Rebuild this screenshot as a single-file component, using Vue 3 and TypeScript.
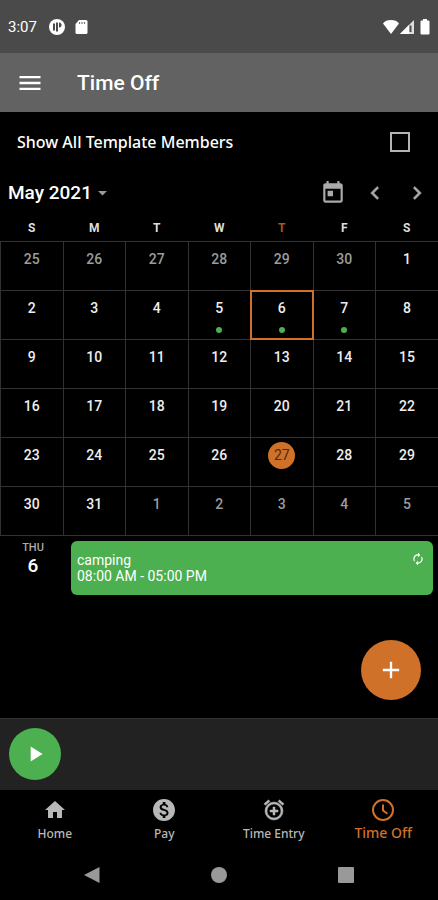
<script setup lang="ts">
import { computed, ref } from 'vue'

interface Day {
  key: number
  date: number
  current: boolean
  today: boolean
  marked: boolean
}

const weekdays = ['S', 'M', 'T', 'W', 'T', 'F', 'S']
const activeWeekday = 4
const showAll = ref(false)
const selected = ref(11)

const weeks = computed<Day[][]>(() =>
  Array.from({ length: 6 }, (_, w) =>
    Array.from({ length: 7 }, (_, d) => {
      const key = w * 7 + d
      const offset = key - 5
      const current = offset >= 1 && offset <= 31
      const date = offset < 1 ? offset + 30 : offset > 31 ? offset - 31 : offset
      return {
        key,
        date,
        current,
        today: current && date === 27,
        marked: current && date >= 5 && date <= 7,
      }
    }),
  ),
)
</script>

<template>
  <div class="app">
    <div class="status">
      <span class="clock">3:07</span>
      <svg class="status-icon" viewBox="0 0 16 16" aria-hidden="true">
        <circle cx="8" cy="8" r="8" fill="#fff" />
        <path d="M4 4.500h2v7H4z" fill="#4a4a4a" />
        <path d="M7 3.500h2v9H7z" fill="#4a4a4a" />
        <path d="M10 3.500a2.500 2.500 0 0 1 0 5z" fill="#4a4a4a" />
      </svg>
      <svg class="status-icon" viewBox="0 0 16 16" aria-hidden="true">
        <path d="M6 1h7a1.500 1.500 0 0 1 1.500 1.500v11A1.500 1.500 0 0 1 13 15H4a1.500 1.500 0 0 1-1.500-1.500V5z" fill="#fff" />
        <path d="M6.500 3v2M9 3v2M11.500 3v2" stroke="#777" stroke-width="1.200" />
      </svg>
      <div class="status-right">
        <svg class="status-icon" viewBox="0 0 16 16" aria-hidden="true">
          <path d="M0 4.500C1.500 2 4.500 1 8 1s6.500 1 8 3.500L8 15z" fill="#fff" />
        </svg>
        <svg class="status-icon" viewBox="0 0 16 16" aria-hidden="true">
          <path d="M1 15 15 1v14z" fill="#ddd" />
          <path d="M1 15 10 6v9z" fill="#fff" />
          <path d="M10.500 6.500h2V13h-2z" fill="#4a4a4a" />
        </svg>
        <svg class="battery" viewBox="0 0 10 16" aria-hidden="true">
          <path d="M3 0h4v1.500h1.500A1 1 0 0 1 9.500 2.500v12a1 1 0 0 1-1 1h-7a1 1 0 0 1-1-1v-12a1 1 0 0 1 1-1H3z" fill="#fff" />
        </svg>
      </div>
    </div>

    <header class="appbar">
      <button class="icon-btn" type="button" aria-label="Menu">
        <svg width="28" height="28" viewBox="0 0 24 24"><path d="M3 18h18v-2H3v2zm0-5h18v-2H3v2zm0-7v2h18V6H3z" fill="#fff" /></svg>
      </button>
      <h1>Time Off</h1>
    </header>

    <label class="show-all">
      <span>Show All Template Members</span>
      <input v-model="showAll" type="checkbox" />
    </label>

    <div class="month-row">
      <button class="month" type="button">
        May 2021
        <svg width="9" height="5" viewBox="0 0 9 5" aria-hidden="true"><path d="M0 0h9L4.500 4.500z" fill="#9a9a9a" /></svg>
      </button>
      <button class="icon-btn" type="button" aria-label="Today">
        <svg width="26" height="26" viewBox="0 0 24 24">
          <path d="M19 3h-1V1h-2v2H8V1H6v2H5c-1.110 0-1.990.9-1.990 2L3 19c0 1.100.89 2 2 2h14c1.100 0 2-.9 2-2V5c0-1.100-.9-2-2-2zm0 16H5V8h14v11zM7 10h5v5H7z" fill="#aaa" />
        </svg>
      </button>
      <button class="icon-btn arrow" type="button" aria-label="Previous month">
        <svg width="26" height="26" viewBox="0 0 24 24"><path d="M15.410 7.410 14 6l-6 6 6 6 1.410-1.410L10.830 12z" fill="#aaa" stroke="#aaa" stroke-width=".5" /></svg>
      </button>
      <button class="icon-btn arrow" type="button" aria-label="Next month">
        <svg width="26" height="26" viewBox="0 0 24 24"><path d="M10 6 8.590 7.410 13.170 12l-4.580 4.590L10 18l6-6z" fill="#aaa" stroke="#aaa" stroke-width=".5" /></svg>
      </button>
    </div>

    <table class="calendar">
      <thead>
        <tr>
          <th v-for="(name, i) in weekdays" :key="i" :class="{ active: i === activeWeekday }" scope="col">{{ name }}</th>
        </tr>
      </thead>
      <tbody>
        <tr v-for="(week, w) in weeks" :key="w">
          <td v-for="day in week" :key="day.key">
            <button
              class="day"
              type="button"
              :class="{ other: !day.current, today: day.today, selected: day.key === selected, marked: day.marked }"
              @click="selected = day.key"
            >
              <span>{{ day.date }}</span>
            </button>
          </td>
        </tr>
      </tbody>
    </table>

    <main class="agenda">
      <section class="agenda-day">
        <div class="agenda-date">
          <span class="agenda-name">THU</span>
          <span class="agenda-number">6</span>
        </div>
        <article class="event">
          <div class="event-text">
            <span>camping</span>
            <span>08:00 AM - 05:00 PM</span>
          </div>
          <svg width="14" height="14" viewBox="0 0 24 24" aria-hidden="true">
            <path d="M12 6v3l4-4-4-4v3c-4.420 0-8 3.580-8 8 0 1.570.46 3.030 1.240 4.260L6.700 14.800A5.870 5.870 0 0 1 6 12c0-3.310 2.690-6 6-6zm6.760 1.740L17.300 9.200c.44.84.7 1.790.7 2.800 0 3.310-2.690 6-6 6v-3l-4 4 4 4v-3c4.420 0 8-3.580 8-8 0-1.570-.46-3.030-1.240-4.260z" fill="#fff" />
          </svg>
        </article>
      </section>
      <button class="fab" type="button" aria-label="Add time off">
        <svg width="28" height="28" viewBox="0 0 24 24"><path d="M19 13h-6v6h-2v-6H5v-2h6V5h2v6h6z" fill="#fff" /></svg>
      </button>
    </main>

    <div class="timer">
      <button class="play" type="button" aria-label="Start timer">
        <svg width="26" height="26" viewBox="0 0 24 24"><path d="M8 5v14l11-7z" fill="#fff" /></svg>
      </button>
    </div>

    <nav class="tabs">
      <a href="#home">
        <svg viewBox="0 0 24 24"><path d="M10 20v-6h4v6h5v-8h3L12 3 2 12h3v8z" /></svg>
        Home
      </a>
      <a href="#pay">
        <svg viewBox="0 0 24 24">
          <path d="M12 1C5.900 1 1 5.900 1 12s4.900 11 11 11 11-4.900 11-11S18.100 1 12 1zm1.410 17.090V20h-2.670v-1.930c-1.710-.36-3.160-1.460-3.270-3.400h1.960c.1 1.050.82 1.870 2.650 1.870 1.960 0 2.400-.98 2.400-1.590 0-.83-.44-1.610-2.670-2.140-2.480-.6-4.180-1.620-4.180-3.670 0-1.720 1.390-2.840 3.110-3.210V4h2.670v1.950c1.860.45 2.790 1.860 2.850 3.390H14.300c-.05-1.110-.64-1.870-2.220-1.870-1.500 0-2.400.68-2.400 1.640 0 .84.65 1.390 2.670 1.910s4.180 1.390 4.180 3.910c-.01 1.830-1.380 2.830-3.120 3.160z" />
        </svg>
        Pay
      </a>
      <a href="#time-entry">
        <svg viewBox="0 0 24 24">
          <path d="M7.880 3.390 6.600 1.860 2 5.710l1.290 1.530 4.590-3.850zM22 5.720l-4.600-3.860-1.290 1.530 4.600 3.860L22 5.720zM12 4a9 9 0 1 0 0 18 9 9 0 0 0 0-18zm0 16a7 7 0 1 1 0-14 7 7 0 0 1 0 14zm1-11h-2v3H8v2h3v3h2v-3h3v-2h-3V9z" stroke="currentColor" stroke-width=".5" />
        </svg>
        Time Entry
      </a>
      <a href="#time-off" class="current" aria-current="page">
        <svg viewBox="0 0 24 24">
          <path d="M12 1a11 11 0 1 0 0 22 11 11 0 0 0 0-22zm0 20a9 9 0 1 1 0-18 9 9 0 0 1 0 18zM13 6.500h-2V13l5 3.500 1-1.600-4-2.900z" />
        </svg>
        Time Off
      </a>
    </nav>

    <div class="system-nav">
      <button type="button" aria-label="Back">
        <svg width="18" height="18" viewBox="0 0 18 18"><path d="M16.500 1v16L1 9z" /></svg>
      </button>
      <button type="button" aria-label="Device home">
        <svg width="18" height="18" viewBox="0 0 18 18"><circle cx="9" cy="9" r="8" /></svg>
      </button>
      <button type="button" aria-label="Overview">
        <svg width="18" height="18" viewBox="0 0 18 18"><rect x="1" y="1" width="16" height="16" rx="1" /></svg>
      </button>
    </div>
  </div>
</template>

<style>
body {
  background: #000;
}
</style>

<style scoped>
.app {
  display: flex;
  flex-direction: column;
  min-height: 100vh;
  background: #000;
  color: #fff;
  font-family: Roboto, "Liberation Sans", sans-serif;
}

svg {
  display: block;
}

button {
  margin: 0;
  padding: 0;
  border: 0;
  background: none;
  color: inherit;
  font: inherit;
  cursor: pointer;
}

.status {
  display: flex;
  align-items: center;
  gap: 8px;
  height: 53px;
  padding: 0 8px;
  background: #4a4a4a;
}

.clock {
  margin-right: 4px;
  font-size: 15px;
  line-height: 20px;
}

.status-icon {
  width: 16px;
  height: 16px;
}

.status-right {
  display: flex;
  align-items: center;
  margin-left: auto;
}

.battery {
  width: 10px;
  height: 16px;
  margin-left: 5px;
}

.appbar {
  display: flex;
  align-items: center;
  gap: 33px;
  height: 59px;
  padding: 0 16px;
  background: #626262;
}

h1 {
  margin: 0;
  font-size: 21px;
  font-weight: 500;
  line-height: 28px;
}

.show-all {
  display: flex;
  align-items: center;
  justify-content: space-between;
  height: 60px;
  padding: 0 28px 0 17px;
  font-family: "Noto Sans", sans-serif;
  font-size: 16px;
  font-weight: 500;
}

.show-all input {
  width: 20px;
  height: 20px;
  margin: 0;
  border: 2px solid #b4b4b4;
  appearance: none;
}

.show-all input:checked {
  background: #cf7129;
}

.month-row {
  display: flex;
  align-items: center;
  height: 42px;
  padding: 0 8px;
}

.month {
  display: flex;
  align-items: center;
  gap: 6px;
  margin-right: auto;
  font-size: 19px;
  font-weight: 500;
  line-height: 24px;
}

.arrow {
  margin-left: 16px;
}

.calendar {
  width: 100%;
  border-collapse: collapse;
  table-layout: fixed;
}

.calendar th {
  height: 27px;
  padding: 0;
  color: #ddd;
  font-size: 12px;
  font-weight: 700;
  line-height: 16px;
}

.calendar th.active {
  color: #a3591f;
}

.calendar td {
  height: 48px;
  padding: 0;
  border: 1px solid #323232;
}

.calendar td:last-child {
  border-right: 0;
}

.day {
  display: flex;
  position: relative;
  justify-content: center;
  width: 100%;
  height: 48px;
  padding-top: 4px;
  color: #eee;
  font-size: 14px;
  font-weight: 500;
}

.day span {
  width: 27px;
  height: 27px;
  border-radius: 50%;
  line-height: 27px;
}

.day.other {
  color: #9c9c9c;
}

.day.today span {
  background: #cf7129;
  color: #4c2c12;
  font-weight: 400;
}

.day.selected {
  outline: 2px solid #cf7129;
  outline-offset: -1px;
}

.day.marked::after {
  position: absolute;
  bottom: 6px;
  width: 6px;
  height: 6px;
  border-radius: 50%;
  background: #4caf50;
  content: "";
}

.agenda {
  position: relative;
  flex: 1;
  min-height: 160px;
  padding: 5px 5px 0 0;
}

.agenda-day {
  display: flex;
}

.agenda-date {
  display: flex;
  flex-direction: column;
  align-items: center;
  width: 66px;
  margin-right: 5px;
}

.agenda-name {
  color: #aaa;
  font-size: 11px;
  font-weight: 500;
  line-height: 13px;
}

.agenda-number {
  font-size: 19px;
  font-weight: 500;
  line-height: 24px;
}

.event {
  display: flex;
  flex: 1;
  align-items: flex-start;
  justify-content: space-between;
  height: 54px;
  padding: 11px 8px 0 6px;
  border-radius: 6px;
  box-sizing: border-box;
  background: #4caf50;
}

.event-text {
  display: flex;
  flex-direction: column;
  font-size: 14px;
  line-height: 16px;
}

.fab {
  display: grid;
  position: absolute;
  right: 17px;
  bottom: 18px;
  place-items: center;
  width: 60px;
  height: 60px;
  border-radius: 50%;
  background: #cf7129;
}

.timer {
  display: flex;
  height: 72px;
  padding: 9px 9px 0;
  border-top: 1px solid #333;
  box-sizing: border-box;
  background: #222;
}

.play {
  display: grid;
  place-items: center;
  width: 52px;
  height: 52px;
  border-radius: 50%;
  background: #4caf50;
}

.tabs {
  display: grid;
  grid-template-columns: repeat(4, 1fr);
  height: 60px;
}

.tabs a {
  display: flex;
  flex-direction: column;
  align-items: center;
  gap: 4px;
  padding-top: 8px;
  color: #b8b8b8;
  font-family: "Noto Sans", sans-serif;
  font-size: 12px;
  font-weight: 500;
  line-height: 16px;
  text-decoration: none;
}

.tabs svg {
  width: 24px;
  height: 24px;
  fill: currentColor;
}

.tabs .current {
  gap: 3px;
  color: #cf7129;
  font-size: 14px;
}

.system-nav {
  display: grid;
  grid-template-columns: repeat(3, 1fr);
  height: 50px;
  padding: 0 29px;
}

.system-nav button {
  display: grid;
  place-items: center;
}

.system-nav svg {
  fill: #999;
}
</style>
